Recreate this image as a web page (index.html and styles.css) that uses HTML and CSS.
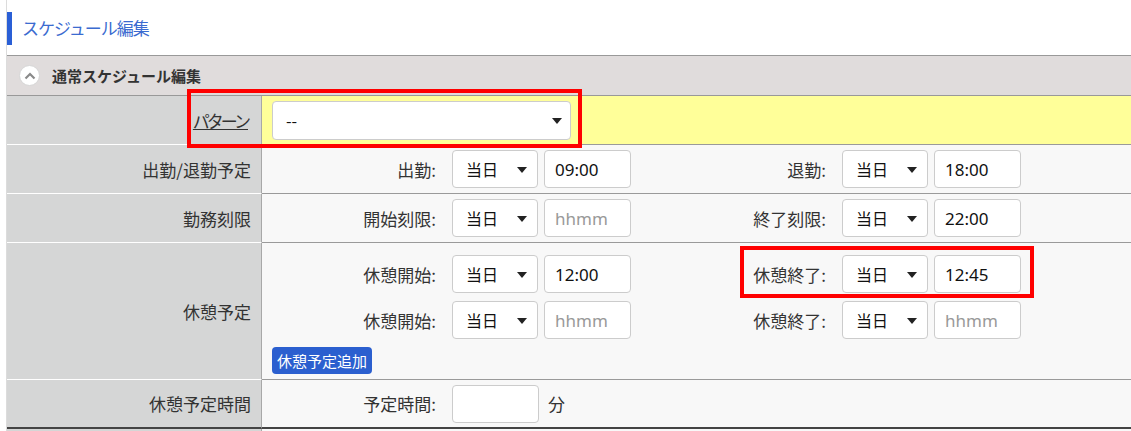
FILE: index.html
```html
<!DOCTYPE html>
<html>
	<head>
		<meta charset="UTF-8">
		<title>スケジュール編集</title>
		<link rel="stylesheet" href="styles.css">
	</head>
	<body>
		<div class="page">
			<h1 class="title">スケジュール編集</h1>

			<div class="sect">
				<span class="toggle">
					<svg width="12" height="8" viewBox="0 0 12 8"><path d="M1.5 6.5 L6 2 L10.5 6.5" fill="none" stroke="#8a8a8a" stroke-width="2.2"/></svg>
				</span>
				<span class="sect-name">通常スケジュール編集</span>
			</div>

			<div class="form">
				<div class="row row-pattern">
					<div class="th"><a href="#" class="link">パターン</a></div>
					<div class="td yellow">
						<div class="sel sel-wide">--<i class="arrow"></i></div>
					</div>
				</div>

				<div class="row">
					<div class="th">出勤/退勤予定</div>
					<div class="td">
						<div class="line">
							<div class="grp">
								<span class="lbl">出勤:</span>
								<div class="sel">当日<i class="arrow"></i></div>
								<input class="time" type="text" value="09:00">
							</div>
							<div class="grp">
								<span class="lbl">退勤:</span>
								<div class="sel">当日<i class="arrow"></i></div>
								<input class="time" type="text" value="18:00">
							</div>
						</div>
					</div>
				</div>

				<div class="row">
					<div class="th">勤務刻限</div>
					<div class="td">
						<div class="line">
							<div class="grp">
								<span class="lbl">開始刻限:</span>
								<div class="sel">当日<i class="arrow"></i></div>
								<input class="time" type="text" placeholder="hhmm">
							</div>
							<div class="grp">
								<span class="lbl">終了刻限:</span>
								<div class="sel">当日<i class="arrow"></i></div>
								<input class="time" type="text" value="22:00">
							</div>
						</div>
					</div>
				</div>

				<div class="row row-break">
					<div class="th">休憩予定</div>
					<div class="td td-stack">
						<div class="line">
							<div class="grp">
								<span class="lbl">休憩開始:</span>
								<div class="sel">当日<i class="arrow"></i></div>
								<input class="time" type="text" value="12:00">
							</div>
							<div class="grp">
								<span class="lbl">休憩終了:</span>
								<div class="sel">当日<i class="arrow"></i></div>
								<input class="time" type="text" value="12:45">
							</div>
						</div>
						<div class="line">
							<div class="grp">
								<span class="lbl">休憩開始:</span>
								<div class="sel">当日<i class="arrow"></i></div>
								<input class="time" type="text" placeholder="hhmm">
							</div>
							<div class="grp">
								<span class="lbl">休憩終了:</span>
								<div class="sel">当日<i class="arrow"></i></div>
								<input class="time" type="text" placeholder="hhmm">
							</div>
						</div>
						<button class="btn" type="button">休憩予定追加</button>
					</div>
				</div>

				<div class="row row-last">
					<div class="th">休憩予定時間</div>
					<div class="td">
						<div class="grp">
							<span class="lbl">予定時間:</span>
							<input class="time" type="text">
							<span class="unit">分</span>
						</div>
					</div>
				</div>

				<div class="row row-tail">
					<div class="th"></div>
					<div class="td"></div>
				</div>
			</div>

			<!-- 注目枠 -->
			<div class="mark mark-pattern"></div>
			<div class="mark mark-break"></div>
		</div>
	</body>
</html>
```

FILE: styles.css
```css
* {
	margin: 0;
	padding: 0;
	box-sizing: border-box;
}

body {
	font-family: "Noto Sans CJK JP", "Noto Sans", sans-serif;
	color: #333;
	background: #fff;
	overflow: hidden;
}

.page {
	position: relative;
	margin-left: 6px;
	padding-top: 12px;
	border-left: 1px solid #dcdcdc;
	height: 431px;
}

.title {
	height: 33px;
	line-height: 31px;
	border-left: 5px solid #2a5fd6;
	padding-left: 10px;
	font-size: 17px;
	letter-spacing: -1px;
	font-weight: normal;
	color: #3b6bd0;
}

.sect {
	margin-top: 10px;
	height: 41px;
	border-top: 1px solid #999;
	border-bottom: 1px solid #999;
	background: #e0dcdc;
	display: flex;
	align-items: center;
	padding-left: 12px;
}

.toggle {
	width: 21px;
	height: 21px;
	border-radius: 50%;
	background: #fff;
	border: 1px solid #d6d6d6;
	display: flex;
	align-items: center;
	justify-content: center;
}

.sect-name {
	margin-left: 12px;
	font-size: 15px;
	font-weight: bold;
	color: #333;
}

.row {
	display: grid;
	grid-template-columns: 255px 1fr;
	height: 49px;
}

.row-break {
	height: 137px;
}

.row-tail {
	height: 10px;
}

.th {
	background: #d5d6d6;
	border-right: 1px solid #a8a8a8;
	border-bottom: 1px solid #fff;
	display: flex;
	align-items: center;
	justify-content: flex-end;
	padding-right: 10px;
	font-size: 17px;
	color: #333;
}

.td {
	background: #f8f8f8;
	border-bottom: 1px solid #9a9a9a;
	display: flex;
	align-items: center;
	padding-left: 10px;
}

.row-last .th,
.row-last .td {
	border-bottom: 2px solid #444;
}

.row-tail .th,
.row-tail .td {
	border-bottom: none;
}

.yellow {
	background: #ffff99;
}

.link {
	color: #333;
	text-decoration: underline;
	letter-spacing: -3px;
	margin-right: 3px;
}

.td-stack {
	flex-direction: column;
	align-items: flex-start;
	padding-top: 12px;
	gap: 8px;
}

.line {
	display: flex;
}

.grp {
	width: 390px;
	display: flex;
	align-items: center;
}

.lbl {
	width: 164px;
	margin-right: 16px;
	text-align: right;
	font-size: 17px;
	color: #333;
}

.sel {
	position: relative;
	width: 86px;
	height: 38px;
	background: #fff;
	border: 1px solid #ccc;
	border-radius: 4px;
	padding-left: 13px;
	font-size: 16px;
	line-height: 36px;
	color: #111;
}

.sel-wide {
	width: 299px;
	height: 39px;
	line-height: 37px;
}

.arrow {
	position: absolute;
	right: 10px;
	top: 16px;
	width: 0;
	height: 0;
	border-left: 5px solid transparent;
	border-right: 5px solid transparent;
	border-top: 6px solid #222;
}

.sel-wide .arrow {
	right: 8px;
}

.time {
	margin-left: 6px;
	width: 87px;
	height: 38px;
	background: #fff;
	border: 1px solid #ccc;
	border-radius: 4px;
	padding-left: 10px;
	font-family: "Noto Sans", "Noto Sans CJK JP", sans-serif;
	font-size: 17px;
	color: #111;
	outline: none;
}

.time::placeholder {
	color: #999;
}

.grp .lbl + .time {
	margin-left: 0;
}

.unit {
	margin-left: 9px;
	font-size: 17px;
	color: #333;
}

.btn {
	height: 27px;
	padding: 0 5px;
	background: #2b5fcf;
	color: #fff;
	border: none;
	border-radius: 4px;
	font-family: "Noto Sans CJK JP", "Noto Sans", sans-serif;
	font-size: 15px;
	line-height: 27px;
}

.mark {
	position: absolute;
	border: 4px solid #f00;
	pointer-events: none;
}

.mark-pattern {
	left: 180px;
	top: 89px;
	width: 395px;
	height: 59px;
}

.mark-break {
	left: 733px;
	top: 246px;
	width: 294px;
	height: 52px;
}
```
